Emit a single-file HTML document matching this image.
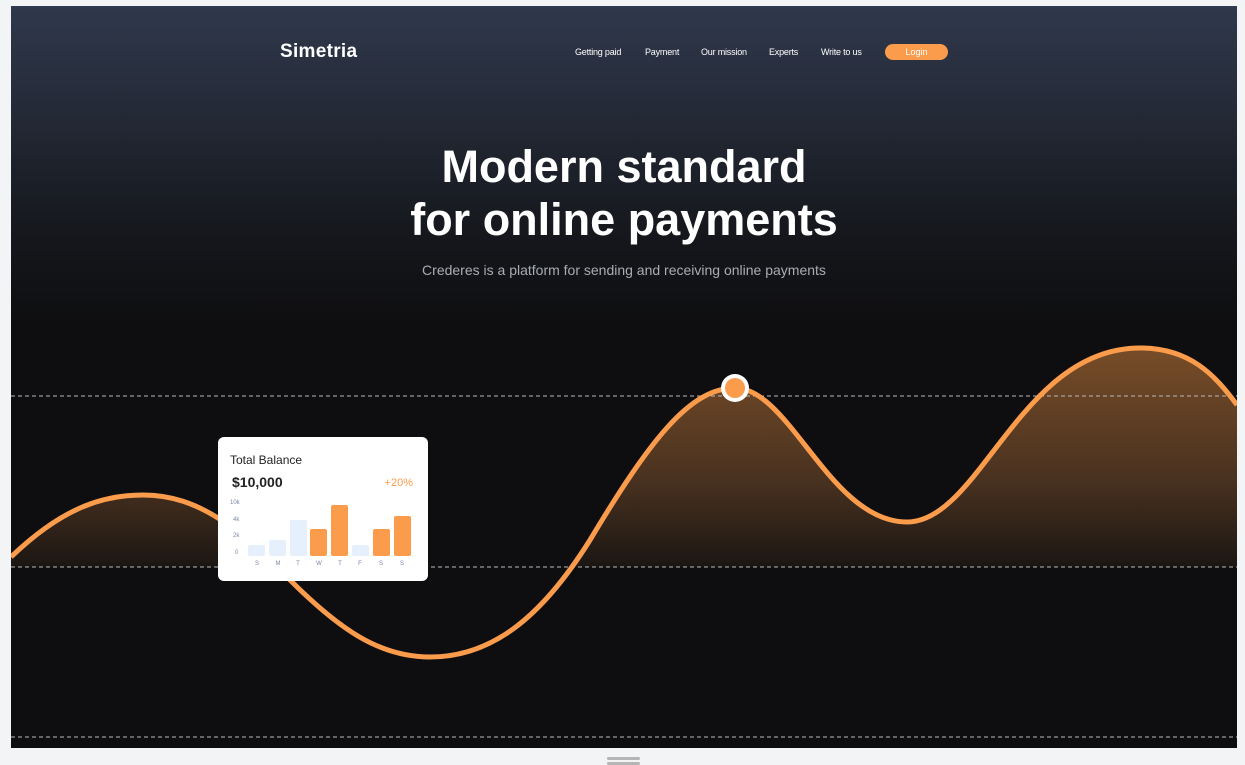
<!DOCTYPE html>
<html><head><style>
*{margin:0;padding:0;box-sizing:border-box}
body{width:1245px;height:765px;background:#f3f4f6;position:relative;overflow:hidden;font-family:"Liberation Sans",sans-serif}
#hero{position:absolute;left:11px;top:6px;width:1226px;height:742px;background:linear-gradient(180deg,#2f384c 0px,#262c3a 90px,#15171c 230px,#0e0e10 320px,#0e0e10 100%);overflow:hidden}
.logo{position:absolute;left:269px;top:35px;color:#fff;font-size:19px;font-weight:bold;letter-spacing:.3px}
.nav{position:absolute;top:41px;color:#fff;font-size:9px;letter-spacing:-.2px}
.login{position:absolute;left:874px;top:38px;width:63px;height:16px;border-radius:8px;background:#fb9b4c;color:#fff;font-size:9px;text-align:center;line-height:16px}
h1{position:absolute;left:0;width:1226px;top:134px;text-align:center;color:#fff;font-size:45px;line-height:53px;font-weight:bold}
.sub{position:absolute;left:0;width:1226px;top:256px;text-align:center;color:#a9acb3;font-size:14px}
.card{position:absolute;left:218px;top:437px;width:210px;height:144px;background:#fff;border-radius:6px}
.handle{position:absolute;left:607px;width:33px;height:3px;background:#b5b5b5;border-radius:2px}
</style></head><body>
<div id="hero">
<div class="logo">Simetria</div>
<div class="nav" style="left:564px">Getting paid</div>
<div class="nav" style="left:634px">Payment</div>
<div class="nav" style="left:690px">Our mission</div>
<div class="nav" style="left:758px">Experts</div>
<div class="nav" style="left:810px">Write to us</div>
<div class="login">Login</div>
<h1>Modern standard<br>for online payments</h1>
<div class="sub">Crederes is a platform for sending and receiving online payments</div>
</div>
<svg width="1245" height="765" style="position:absolute;left:0;top:0">
<defs><linearGradient id="g" x1="0" y1="340" x2="0" y2="570" gradientUnits="userSpaceOnUse"><stop offset="0" stop-color="#7a4e28"/><stop offset="0.6" stop-color="#4a3220"/><stop offset="1" stop-color="#1a1512"/></linearGradient>
<clipPath id="c"><rect x="11" y="6" width="1226" height="742"/></clipPath>
<clipPath id="c2"><rect x="11" y="6" width="1226" height="561"/></clipPath></defs>
<g clip-path="url(#c)">
<path clip-path="url(#c2)" d="M11,557 C60,510 100,495 143,495 C200,495 240,530 290,580 C340,630 380,657 430,657 C490,657 540,620 590,540 C650,440 690,388 735,388 C790,388 830,522 907,522 C980,522 1020,348 1140,348 C1190,348 1215,375 1237,405 L1237,567 L11,567 Z" fill="url(#g)"/>
<line x1="11" y1="396" x2="1237" y2="396" stroke="#bbb" stroke-dasharray="4 3" stroke-width="1"/>
<line x1="11" y1="567" x2="1237" y2="567" stroke="#bbb" stroke-dasharray="4 3" stroke-width="1"/>
<line x1="11" y1="737" x2="1237" y2="737" stroke="#bbb" stroke-dasharray="4 3" stroke-width="1"/>
<path d="M11,557 C60,510 100,495 143,495 C200,495 240,530 290,580 C340,630 380,657 430,657 C490,657 540,620 590,540 C650,440 690,388 735,388 C790,388 830,522 907,522 C980,522 1020,348 1140,348 C1190,348 1215,375 1237,405" fill="none" stroke="#fb9b4c" stroke-width="5"/>
<circle cx="735" cy="388" r="14" fill="#fff"/><circle cx="735" cy="388" r="10" fill="#fb9b4c"/>
</g></svg>
<div class="card">
<svg width="210" height="144">
<text x="12" y="27" font-size="12" fill="#222" font-family="Liberation Sans">Total Balance</text>
<text x="14" y="50" font-size="14" fill="#222" font-weight="bold" font-family="Liberation Sans">$10,000</text>
<text x="195" y="49" font-size="11" fill="#fb9b4c" text-anchor="end" font-family="Liberation Sans">+20%</text>
<g font-size="6" fill="#7a86a6" font-family="Liberation Sans">
<text x="12" y="67">10k</text><text x="15" y="84">4k</text><text x="15" y="100">2k</text><text x="17" y="117">0</text>
</g>
<g>
<rect x="30" y="108" width="17" height="11" rx="2" fill="#e6f0fd"/>
<rect x="51" y="103" width="17" height="16" rx="2" fill="#e6f0fd"/>
<rect x="72" y="83" width="17" height="36" rx="2" fill="#e6f0fd"/>
<rect x="92" y="92" width="17" height="27" rx="2" fill="#fb9b4c"/>
<rect x="113" y="68" width="17" height="51" rx="2" fill="#fb9b4c"/>
<rect x="134" y="108" width="17" height="11" rx="2" fill="#e6f0fd"/>
<rect x="155" y="92" width="17" height="27" rx="2" fill="#fb9b4c"/>
<rect x="176" y="79" width="17" height="40" rx="2" fill="#fb9b4c"/>
</g>
<g font-size="6" fill="#7a86a6" text-anchor="middle" font-family="Liberation Sans">
<text x="39" y="128">S</text><text x="60" y="128">M</text><text x="80" y="128">T</text><text x="101" y="128">W</text><text x="122" y="128">T</text><text x="142" y="128">F</text><text x="163" y="128">S</text><text x="184" y="128">S</text>
</g></svg>
</div>
<div class="handle" style="top:757px"></div><div class="handle" style="top:762px"></div>
</body></html>
